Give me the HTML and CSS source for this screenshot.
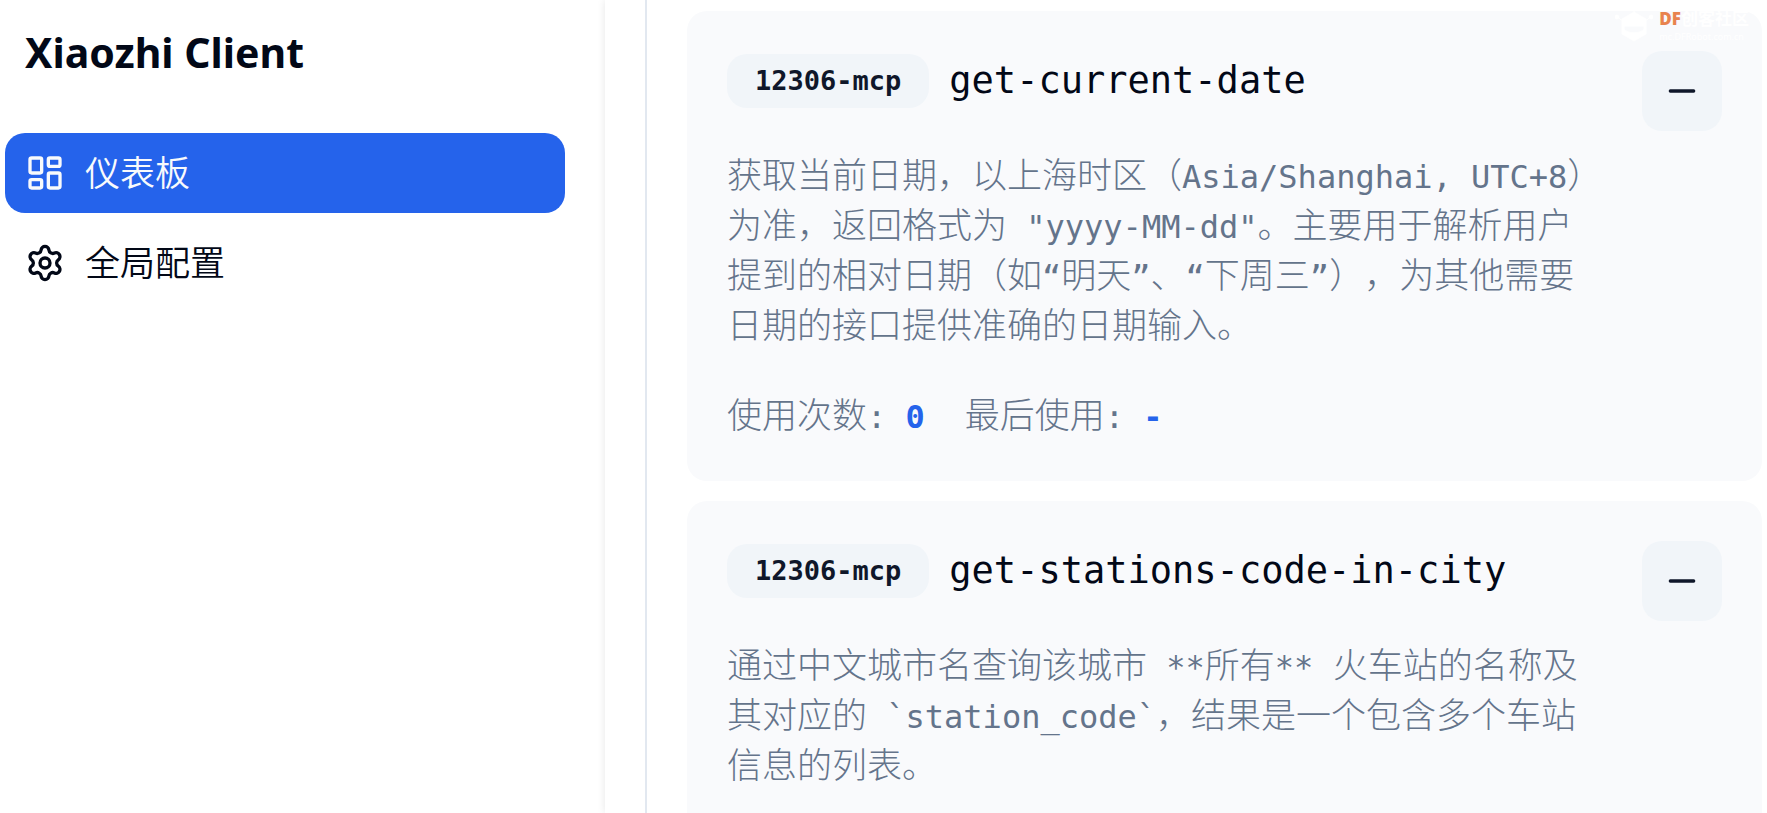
FILE: index.html
```html
<!DOCTYPE html>
<html lang="zh-CN">
<head>
    <meta charset="UTF-8">
    <meta name="viewport" content="width=device-width, initial-scale=1.0">
    <title>Xiaozhi Client</title>
    <link rel="stylesheet" href="styles.css">
</head>
<body>
    <aside class="sidebar">
        <h1 class="brand">Xiaozhi Client</h1>
        <nav class="menu">
            <a href="#" class="menu-item active">
                <svg class="icon" viewBox="0 0 24 24">
                    <rect x="3" y="3" width="7" height="9" rx="1"/>
                    <rect x="14" y="3" width="7" height="5" rx="1"/>
                    <rect x="14" y="12" width="7" height="9" rx="1"/>
                    <rect x="3" y="16" width="7" height="5" rx="1"/>
                </svg>
                <span>仪表板</span>
            </a>
            <a href="#" class="menu-item">
                <svg class="icon" viewBox="0 0 24 24">
                    <path d="M9.671 4.136a2.34 2.34 0 0 1 4.659 0 2.34 2.34 0 0 0 3.319 1.915 2.34 2.34 0 0 1 2.33 4.033 2.34 2.34 0 0 0 0 3.831 2.34 2.34 0 0 1-2.33 4.033 2.34 2.34 0 0 0-3.319 1.915 2.34 2.34 0 0 1-4.659 0 2.34 2.34 0 0 0-3.32-1.915 2.34 2.34 0 0 1-2.33-4.033 2.34 2.34 0 0 0 0-3.831A2.34 2.34 0 0 1 6.35 6.051a2.34 2.34 0 0 0 3.319-1.915"/>
                    <circle cx="12" cy="12" r="3"/>
                </svg>
                <span>全局配置</span>
            </a>
        </nav>
    </aside>
    <main class="content">
        <section class="tool-list">
            <article class="tool-card">
                <div class="tool-body">
                    <div class="tool-header">
                        <span class="badge">12306-mcp</span>
                        <h2 class="tool-name">get-current-date</h2>
                    </div>
                    <p class="tool-desc">获取当前日期，以上海时区（<span class="code">Asia/Shanghai, UTC+8</span>）为准，返回格式为<span class="code"> "yyyy-MM-dd"</span>。主要用于解析用户提到的相对日期（如<span class="code">“</span>明天<span class="code">”</span>、<span class="code">“</span>下周三<span class="code">”</span>），为其他需要日期的接口提供准确的日期输入。</p>
                    <div class="tool-stats">
                        <span>使用次数<span class="code">: <b>0</b></span></span>
                        <span>最后使用<span class="code">: <b>-</b></span></span>
                    </div>
                </div>
                <button type="button" class="remove-btn" aria-label="移除">
                    <svg class="icon" viewBox="0 0 24 24"><path d="M5 12h14"/></svg>
                </button>
            </article>
            <article class="tool-card">
                <div class="tool-body">
                    <div class="tool-header">
                        <span class="badge">12306-mcp</span>
                        <h2 class="tool-name">get-stations-code-in-city</h2>
                    </div>
                    <p class="tool-desc">通过中文城市名查询该城市<span class="code"> **</span>所有<span class="code">** </span>火车站的名称及其对应的<span class="code"> `station_code`</span>，结果是一个包含多个车站信息的列表。</p>
                </div>
                <button type="button" class="remove-btn" aria-label="移除">
                    <svg class="icon" viewBox="0 0 24 24"><path d="M5 12h14"/></svg>
                </button>
            </article>
        </section>
    </main>
    <div class="watermark">
        <svg class="watermark-logo" viewBox="0 0 38 32">
            <path d="M19 2 31 9v15l-12 7-12-7V9z"/>
            <path d="M2 7l6 4M36 7l-6 4M19 0v4"/>
            <circle cx="2" cy="7" r="2"/>
            <circle cx="36" cy="7" r="2"/>
            <path class="visor" d="M9 16h20v3c-3 5-17 5-20 0z"/>
        </svg>
        <div>
            <div class="watermark-title"><b>DF</b>创客社区</div>
            <div class="watermark-url">mc.DFRobot.com.cn</div>
        </div>
    </div>
</body>
</html>
```

FILE: styles.css
```css
* {
    box-sizing: border-box;
}

body {
    display: flex;
    height: 100vh;
    margin: 0;
    overflow: hidden;
    position: relative;
    background-color: white;
    color: #020817;
    font-family: "Noto Sans", "Noto Sans CJK SC", sans-serif;
}

h1, h2, p {
    margin: 0;
}

.icon {
    width: 40px;
    height: 40px;
    flex-shrink: 0;
    fill: none;
    stroke: currentColor;
    stroke-width: 2;
    stroke-linecap: round;
    stroke-linejoin: round;
}

/* Sidebar */
.sidebar {
    flex: 0 0 605px;
    padding: 22px 40px 0 5px;
}

.brand {
    padding: 0 20px;
    font-size: 41px;
    line-height: 60px;
    font-weight: bold;
}

.menu {
    display: flex;
    flex-direction: column;
    gap: 10px;
    margin-top: 51px;
}

.menu-item {
    display: flex;
    align-items: center;
    gap: 20px;
    height: 80px;
    padding: 0 20px;
    border-radius: 20px;
    color: #020817;
    font-size: 35px;
    line-height: 50px;
    font-weight: 350;
    text-decoration: none;
}

.menu-item.active {
    background-color: #2563eb;
    color: #f8fafc;
}

/* Tool list */
.content {
    flex: 1;
    min-width: 0;
    padding-left: 40px;
    box-shadow: 0 0 8px rgba(0, 0, 0, 0.1);
}

.tool-list {
    display: flex;
    flex-direction: column;
    gap: 20px;
    min-height: 100%;
    padding: 11px 5px 0 40px;
    border-left: 2px solid #e2e8f0;
}

.tool-card {
    display: flex;
    align-items: flex-start;
    gap: 38px;
    padding: 40px;
    border-radius: 20px;
    background-color: #f9fafc;
}

.tool-body {
    flex: 1;
    min-width: 0;
}

.tool-header {
    display: flex;
    align-items: center;
    gap: 20px;
    height: 60px;
    margin-bottom: 40px;
    font-family: "DejaVu Sans Mono", monospace;
}

.badge {
    padding: 7px 28px;
    border-radius: 20px;
    background-color: #f1f5f9;
    color: #0f172a;
    font-size: 27px;
    line-height: 40px;
    font-weight: bold;
}

.tool-name {
    font-size: 37px;
    line-height: 60px;
    font-weight: normal;
    white-space: nowrap;
}

/* The mono font sets the baseline, Chinese glyphs fall through to Noto */
.tool-desc,
.tool-stats {
    color: #64748b;
    font-family: "DejaVu Sans Mono", "Noto Sans CJK SC", monospace;
    font-size: 35px;
    line-height: 50px;
    font-weight: 300;
    text-spacing-trim: space-all;
}

.code {
    font-size: 32px;
    line-height: 40px;
    font-weight: normal;
}

.tool-stats {
    display: flex;
    gap: 40px;
    margin-top: 40px;
}

.tool-stats b {
    color: #2563eb;
}

.remove-btn {
    display: flex;
    align-items: center;
    justify-content: center;
    width: 80px;
    height: 80px;
    padding: 0;
    border: none;
    border-radius: 20px;
    background-color: #f1f5f9;
    color: #0f172a;
    cursor: pointer;
}

/* Community watermark */
.watermark {
    position: absolute;
    top: 10px;
    right: 18px;
    display: flex;
    gap: 6px;
    color: white;
    font-family: "Noto Sans", "Noto Sans CJK SC", sans-serif;
    pointer-events: none;
}

.watermark-logo {
    width: 38px;
    height: 32px;
    fill: white;
    stroke: white;
}

.watermark-logo .visor {
    fill: #f9fafc;
}

.watermark-title {
    font-size: 17px;
    line-height: 18px;
    font-weight: bold;
}

.watermark-title b {
    color: #e8834e;
}

.watermark-url {
    font-size: 9px;
    line-height: 18px;
}
```
